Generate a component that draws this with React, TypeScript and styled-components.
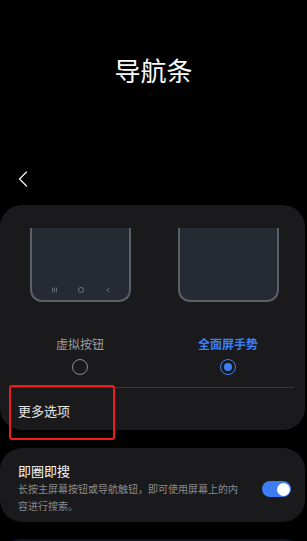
import React, { useState } from "react";
import styled, { createGlobalStyle } from "styled-components";

const GlobalStyle = createGlobalStyle`
  html, body {
    margin: 0;
    padding: 0;
    background: #000;
  }
  body {
    font-family: "Noto Sans CJK SC", "Noto Sans", sans-serif;
    color: #f2f2f2;
  }
`;

const Page = styled.div`
  width: 307px;
  height: 541px;
  overflow: hidden;
  background: #000;
`;

const Title = styled.h1`
  margin: 0;
  padding-top: 54px;
  height: 32px;
  font-size: 26px;
  line-height: 32px;
  font-weight: 400;
  text-align: center;
  color: #fafafa;
`;

const BackRow = styled.div`
  margin-top: 80px;
  height: 26px;
  display: flex;
  align-items: center;
  padding-left: 18px;
`;

const Card = styled.div`
  width: 305px;
  background: #1a1a1c;
  border-radius: 22px;
`;

const ModeCard = styled(Card)`
  margin-top: 13px;
  padding: 23px 3px 0 6px;
  box-sizing: border-box;
`;

const Options = styled.div`
  display: grid;
  grid-template-columns: 1fr 1fr;
`;

const Option = styled.div`
  display: flex;
  flex-direction: column;
  align-items: center;
`;

const Preview = styled.div`
  width: 101px;
  height: 74px;
  box-sizing: border-box;
  background: #262a33;
  border: 2px solid #5a5f68;
  border-top: none;
  border-radius: 0 0 12px 12px;
  display: flex;
  align-items: flex-end;
  justify-content: center;
  padding-bottom: 4px;
`;

const OptionLabel = styled.div<{ active?: boolean }>`
  margin-top: 34px;
  font-size: 12px;
  line-height: 16px;
  font-weight: ${(p) => (p.active ? 600 : 400)};
  color: ${(p) => (p.active ? "#3d80f5" : "#9c9c9c")};
`;

const Radio = styled.div<{ checked?: boolean }>`
  margin-top: 7px;
  width: 16px;
  height: 16px;
  box-sizing: border-box;
  border-radius: 50%;
  border: 1.6px solid ${(p) => (p.checked ? "#3d80f5" : "#8a8a8a")};
  display: flex;
  align-items: center;
  justify-content: center;
  &::after {
    content: "";
    display: ${(p) => (p.checked ? "block" : "none")};
    width: 8px;
    height: 8px;
    border-radius: 50%;
    background: #3d80f5;
  }
`;

const Divider = styled.div`
  margin: 12px 8px 0 4px;
  height: 1px;
  background: #3a3a3d;
`;

const MoreRow = styled.div`
  position: relative;
  height: 42px;
  box-sizing: border-box;
  padding: 14px 0 0 12px;
  font-size: 13px;
  line-height: 18px;
  color: #e6e6e6;
`;

const Highlight = styled.div`
  position: absolute;
  left: 3px;
  top: -3px;
  width: 106px;
  height: 55px;
  box-sizing: border-box;
  border: 2px solid #f01c1c;
  border-radius: 3px;
`;

const SwitchCard = styled(Card)`
  margin-top: 18px;
  height: 74px;
  box-sizing: border-box;
  padding: 14px 14px 7px 18px;
  display: flex;
  align-items: center;
  justify-content: space-between;
`;

const TextBlock = styled.div`
  width: 226px;
  align-self: flex-start;
`;

const ItemTitle = styled.div`
  font-size: 13px;
  line-height: 18px;
  color: #f2f2f2;
`;

const ItemDesc = styled.div`
  font-size: 10px;
  line-height: 17px;
  color: #8a8a8c;
`;

const Toggle = styled.div<{ on: boolean }>`
  width: 29px;
  height: 16px;
  border-radius: 8px;
  background: ${(p) => (p.on ? "#3c7ef2" : "#555")};
  display: flex;
  align-items: center;
  justify-content: ${(p) => (p.on ? "flex-end" : "flex-start")};
  padding: 0 1.5px;
  box-sizing: border-box;
  margin-top: 1px;
  cursor: pointer;
  &::after {
    content: "";
    width: 13px;
    height: 13px;
    border-radius: 50%;
    background: #fff;
  }
`;

const NextCard = styled(Card)`
  margin-top: 17px;
  height: 40px;
  background: #0b1424;
`;

const BackIcon = () => (
  <svg width="10" height="16" viewBox="0 0 10 16">
    <polyline
      points="8.5,1 1.5,8 8.5,15"
      fill="none"
      stroke="#f0f0f0"
      strokeWidth="1.3"
      strokeLinecap="round"
      strokeLinejoin="round"
    />
  </svg>
);

// recents / home / back, as drawn on the button-style preview
const NavButtons = () => (
  <svg width="97" height="12" viewBox="0 0 97 12">
    <g stroke="#6a6f78" fill="none">
      <line x1="20.5" y1="3.5" x2="20.5" y2="8.5" strokeWidth="0.9" />
      <line x1="22.5" y1="3.5" x2="22.5" y2="8.5" strokeWidth="0.9" />
      <line x1="24.5" y1="3.5" x2="24.5" y2="8.5" strokeWidth="0.9" />
      <circle cx="49" cy="6" r="2.6" strokeWidth="1" />
      <polyline points="77.5,3.5 75,6 77.5,8.5" strokeWidth="1" />
    </g>
  </svg>
);

const App: React.FC = () => {
  const [mode, setMode] = useState<"buttons" | "gestures">("gestures");
  const [circleSearch, setCircleSearch] = useState<boolean>(true);

  return (
    <Page>
      <GlobalStyle />
      <Title>导航条</Title>
      <BackRow>
        <BackIcon />
      </BackRow>
      <ModeCard>
        <Options>
          <Option onClick={() => setMode("buttons")}>
            <Preview>
              <NavButtons />
            </Preview>
            <OptionLabel active={mode === "buttons"}>虚拟按钮</OptionLabel>
            <Radio checked={mode === "buttons"} />
          </Option>
          <Option onClick={() => setMode("gestures")}>
            <Preview />
            <OptionLabel active={mode === "gestures"}>全面屏手势</OptionLabel>
            <Radio checked={mode === "gestures"} />
          </Option>
        </Options>
        <Divider />
        <MoreRow>
          更多选项
          <Highlight />
        </MoreRow>
      </ModeCard>
      <SwitchCard>
        <TextBlock>
          <ItemTitle>即圈即搜</ItemTitle>
          <ItemDesc>
            长按主屏幕按钮或导航触钮，即可使用屏幕上的内容进行搜索。
          </ItemDesc>
        </TextBlock>
        <Toggle on={circleSearch} onClick={() => setCircleSearch(!circleSearch)} />
      </SwitchCard>
      <NextCard />
    </Page>
  );
};

export default App;
